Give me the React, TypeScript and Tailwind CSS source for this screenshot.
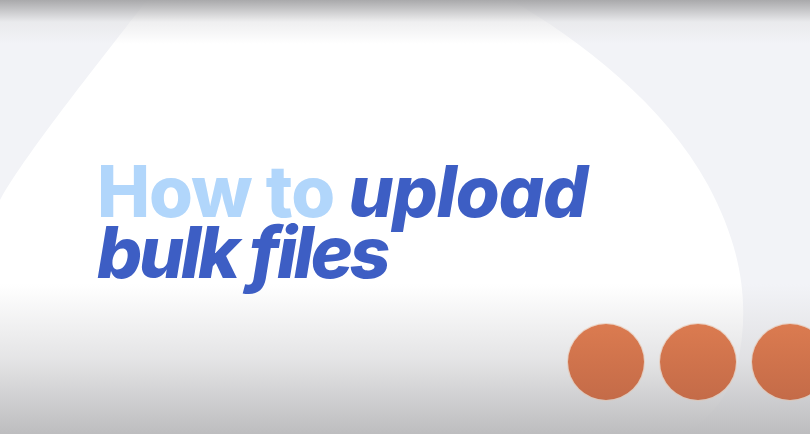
import React from 'react';

// Soft white blob that sits behind the title
function Blob() {
	return (
		<svg
			className="absolute inset-0 h-full w-full"
			viewBox="0 0 810 434"
			preserveAspectRatio="none"
		>
			<path
				d="M147,0 L511,0 C580,40 665,105 708,185 C742,248 750,305 738,362 C730,396 708,420 685,434 L0,434 L0,200 C28,150 105,55 147,0 Z"
				fill="#ffffff"
			/>
		</svg>
	);
}

export default function App() {
	const dots = [0, 1, 2];

	return (
		<div className="relative h-[434px] w-[810px] overflow-hidden bg-[#f2f3f7] font-['Inter','Liberation_Sans',sans-serif]">
			<Blob />

			{/* top and bottom shading */}
			<div className="absolute inset-x-0 top-0 h-[44px] bg-gradient-to-b from-[#a9a9ab] via-[#e4e4e6]/60 to-transparent" />
			<div className="absolute inset-x-0 bottom-0 h-[150px] bg-gradient-to-b from-transparent via-[#d9d9db]/70 to-[#bdbdbf]" />

			<div className="relative flex h-full flex-col">
				<h1 className="pl-[97px] pt-[161px] text-[71px] leading-[61px] font-extrabold tracking-[-0.015em]">
					<span className="text-[#b1d6fb]">How to </span>
					<span className="italic text-[#3d5ec4]">upload</span>
					<br />
					<span className="italic tracking-[-0.045em] text-[#3d5ec4]">bulk files</span>
				</h1>

				<div className="mt-auto mb-[34px] ml-[568px] flex gap-4">
					{dots.map((d) => (
						<div
							key={d}
							className="h-[76px] w-[76px] shrink-0 rounded-full bg-gradient-to-b from-[#db7b50] to-[#c46b48] ring-1 ring-[#e8c2a8]/60"
						/>
					))}
				</div>
			</div>
		</div>
	);
}
